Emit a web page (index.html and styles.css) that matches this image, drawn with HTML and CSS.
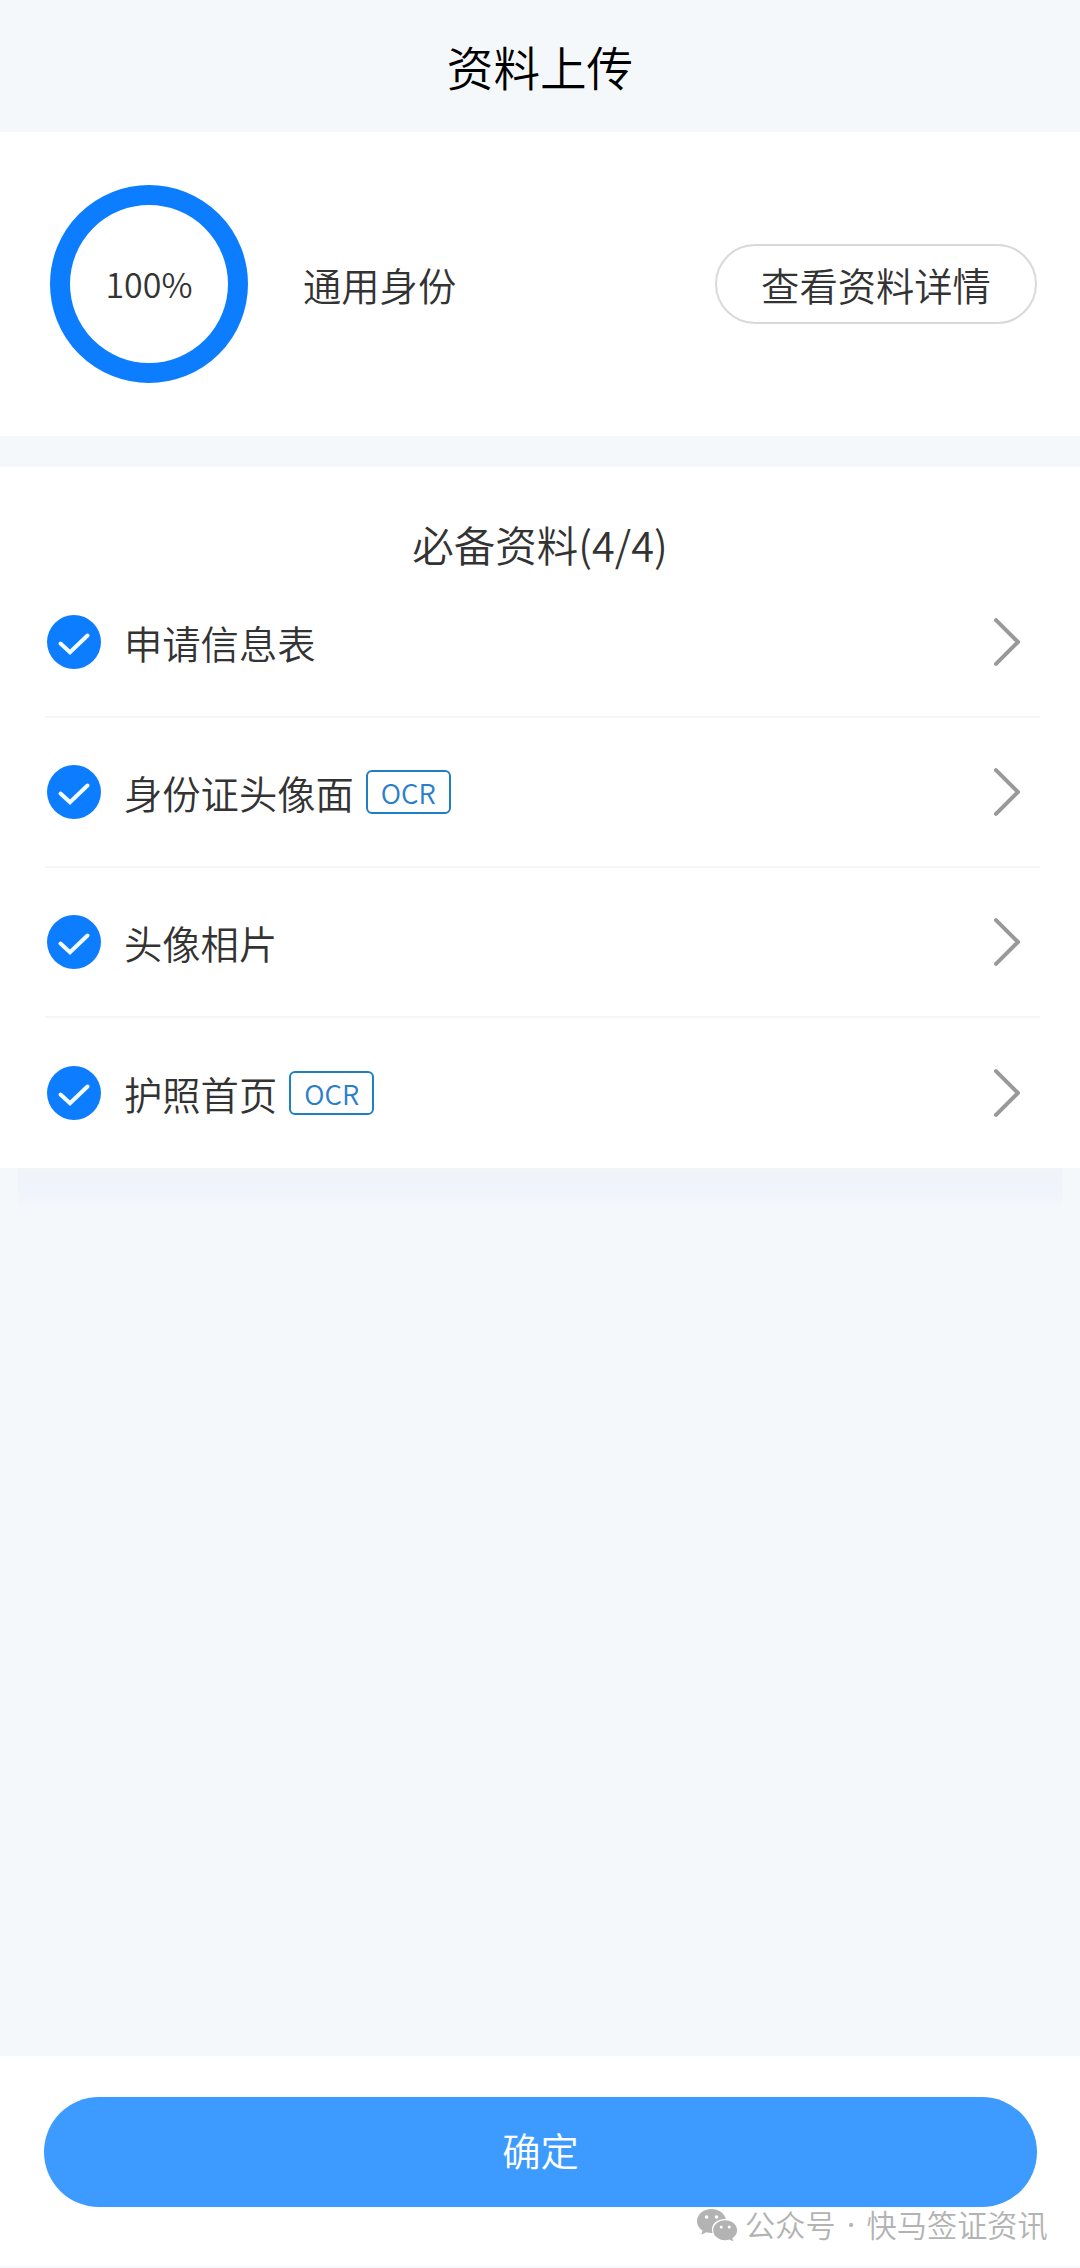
FILE: index.html
```html
<!DOCTYPE html>
<html lang="zh-CN">
<head>
<meta charset="utf-8">
<title>资料上传</title>
<link rel="stylesheet" href="styles.css">
</head>
<body>
<svg class="defs" width="0" height="0">
  <symbol id="check" viewBox="0 0 54 54"><circle cx="27" cy="27" r="27" fill="#0d7dff"/><path d="M13.500 28.500 23 37.200 40.500 20.500" fill="none" stroke="#f4fcff" stroke-width="4" stroke-linecap="round" stroke-linejoin="miter"/></symbol>
  <symbol id="chevron" viewBox="0 0 26 48"><path d="M2 2.200 24 24 2 45.800" fill="none" stroke="#999" stroke-width="4" stroke-linecap="round" stroke-linejoin="round"/></symbol>
</svg>
<header class="header">资料上传</header>
<section class="summary">
  <div class="ring">100%</div>
  <div class="identity">通用身份</div>
  <button class="detail">查看资料详情</button>
</section>
<main class="materials">
  <h2 class="heading">必备资料(4/4)</h2>
  <ul class="list">
    <li class="row"><svg class="check"><use href="#check"/></svg><span class="label">申请信息表</span><svg class="chevron"><use href="#chevron"/></svg></li>
    <li class="row"><svg class="check"><use href="#check"/></svg><span class="label">身份证头像面</span><span class="tag">OCR</span><svg class="chevron"><use href="#chevron"/></svg></li>
    <li class="row"><svg class="check"><use href="#check"/></svg><span class="label">头像相片</span><svg class="chevron"><use href="#chevron"/></svg></li>
    <li class="row"><svg class="check"><use href="#check"/></svg><span class="label">护照首页</span><span class="tag">OCR</span><svg class="chevron"><use href="#chevron"/></svg></li>
  </ul>
</main>
<div class="shade"></div>
<footer class="footer">
  <button class="confirm">确定</button>
  <div class="account">
    <svg class="wechat" viewBox="0 0 40 32">
      <path fill="#b3b3b3" fill-rule="evenodd" d="M14.500 0C6.500 0 0 5.400 0 12.200c0 3.900 2.100 7.100 5.500 9.400L4.300 25.800l5-2.600c2.100.6 4 .9 6.200.8C13 15.500 19.500 9.800 28.800 10 27.400 4.200 21.500 0 14.500 0ZM9.600 6.200a1.800 1.800 0 1 1 0 3.600 1.800 1.800 0 0 1 0-3.600Zm9.900 0a1.800 1.800 0 1 1 0 3.600 1.800 1.800 0 0 1 0-3.600Z"/>
      <path fill="#b3b3b3" fill-rule="evenodd" d="M28.200 11.300c-6.700 0-12 4.400-12 10s5.300 10 12 10c1.500 0 3-.3 4.300-.7l3.900 1.900-1-3.300c2.900-1.900 4.700-4.700 4.700-7.900 0-5.600-5.300-10-11.900-10Zm-4 5.100a1.500 1.500 0 1 1 0 3 1.500 1.500 0 0 1 0-3Zm8 0a1.500 1.500 0 1 1 0 3 1.500 1.500 0 0 1 0-3Z"/>
    </svg>
    <span class="source">公众号</span><span class="dot">·</span><span class="name">快马签证资讯</span>
  </div>
</footer>
</body>
</html>
```
FILE: styles.css
```css
* { box-sizing: border-box; }
body {
  margin: 0;
  width: 1080px;
  height: 2268px;
  display: flex;
  flex-direction: column;
  background: #f4f8fb;
  color: #333;
  font-family: "Noto Sans CJK SC", sans-serif;
  font-size: 38.3px;
  font-weight: 350;
  line-height: 1.4;
  overflow: hidden;
}
button { font: inherit; color: inherit; padding: 0; }
.defs { position: absolute; }
.header {
  height: 132px;
  display: flex;
  align-items: center;
  justify-content: center;
  font-size: 46.6px;
  color: #000;
}
.summary {
  height: 304px;
  padding: 0 43px 1px 50px;
  display: flex;
  align-items: center;
  background: #fff;
  margin-bottom: 31px;
}
.ring {
  width: 198px;
  height: 198px;
  border: 20px solid #0d7dff;
  border-radius: 50%;
  display: flex;
  align-items: center;
  justify-content: center;
  font-size: 34px;
}
.identity { margin-left: 55px; padding-top: 2px; }
.detail {
  width: 322px;
  height: 80px;
  padding-top: 3px;
  margin-left: auto;
  border: 2px solid #d9d9d9;
  border-radius: 40px;
  background: #fff;
}
.materials { height: 701px; background: #fff; }
.heading {
  margin: 0;
  height: 101px;
  padding-top: 48px;
  font-size: 41.5px;
  line-height: 58px;
  font-weight: inherit;
  text-align: center;
}
.list {
  margin: 0;
  padding: 0 40px 0 45px;
  list-style: none;
}
.row {
  height: 150px;
  padding: 0 20px 0 2px;
  display: flex;
  align-items: center;
  border-bottom: 2px solid #f6f6f7;
}
.row:last-child { border-bottom: 0; padding-bottom: 1px; }
.check { width: 54px; height: 54px; }
.label { margin-left: 23px; padding-top: 2px; }
.tag {
  width: 85px;
  height: 44px;
  margin-left: 12px;
  border: 2px solid #1f7fc4;
  border-radius: 6px;
  color: #2b7fca;
  font-size: 27.5px;
  line-height: 40px;
  text-align: center;
}
.chevron { width: 26px; height: 48px; margin-left: auto; }
.shade {
  height: 40px;
  margin: 0 18px;
  background: linear-gradient(#f1f5f8, #eff3fb 50%, #f4f8fb);
}
.footer {
  height: 212px;
  margin-top: auto;
  padding: 41px 43px 0 44px;
  background: #fff;
  border-bottom: 2px solid #f7f8f9;
}
.confirm {
  display: block;
  width: 993px;
  height: 110px;
  padding-bottom: 5px;
  border: 0;
  border-radius: 55px;
  background: #3d9bff;
  color: #fff;
}
.account {
  height: 36px;
  margin-right: -40px;
  padding-left: 653px;
  display: flex;
  align-items: center;
  color: #b3b3b3;
  font-size: 30.2px;
  line-height: 36px;
  white-space: nowrap;
}
.account > * { flex-shrink: 0; }
.wechat { width: 40px; height: 32px; }
.source { margin-left: 8px; margin-top: -3px; }
.dot { width: 31px; text-align: center; font-family: "Noto Sans", sans-serif; font-weight: 400; }
.name { margin-top: -3px; }
```
